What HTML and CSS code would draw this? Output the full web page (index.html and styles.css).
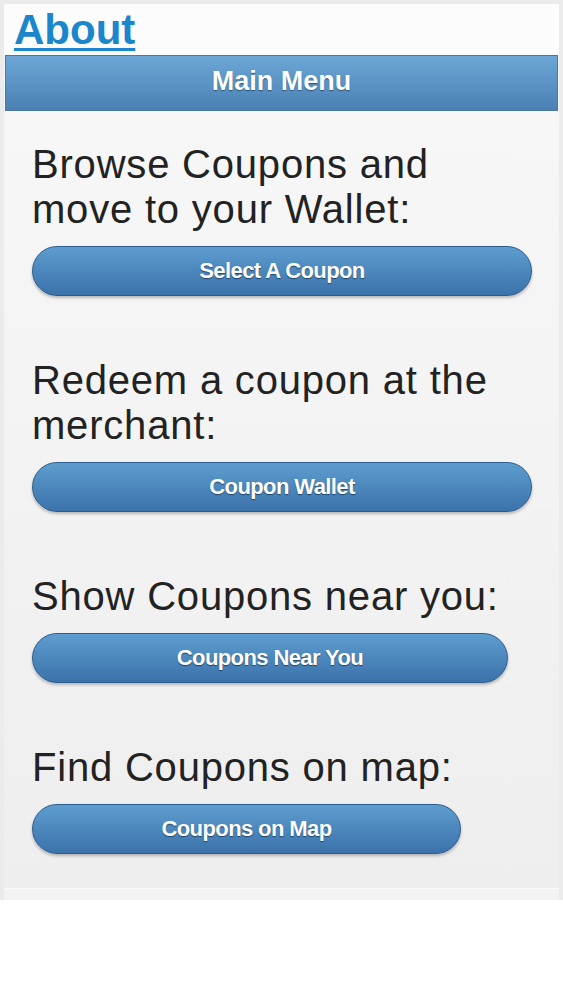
FILE: index.html
```html
<!DOCTYPE html>
<html>
<head>
<meta charset="utf-8">
<link rel="stylesheet" href="styles.css">
</head>
<body>
<div class="frame">
  <div class="page">
    <div class="top"><a class="about" href="#">About</a></div>
    <div class="bar">Main Menu</div>
    <div class="menu">
      <div class="item">
        <h2 class="label">Browse Coupons and move to your Wallet:</h2>
        <a class="btn w500" href="#">Select A Coupon</a>
      </div>
      <div class="item">
        <h2 class="label">Redeem a coupon at the merchant:</h2>
        <a class="btn w500" href="#">Coupon Wallet</a>
      </div>
      <div class="item">
        <h2 class="label">Show Coupons near you:</h2>
        <a class="btn w476" href="#">Coupons Near You</a>
      </div>
      <div class="item">
        <h2 class="label">Find Coupons on map:</h2>
        <a class="btn w429" href="#">Coupons on Map</a>
      </div>
    </div>
    <div class="foot"></div>
  </div>
</div>
</body>
</html>
```

FILE: styles.css
```css
html, body {
  margin: 0;
  padding: 0;
  background: #ffffff;
}
body {
  font-family: "Liberation Sans", Arial, sans-serif;
}
.frame {
  width: 563px;
  height: 900px;
  box-sizing: border-box;
  background: #ebebec;
  padding: 4px 4px 0 4px;
}
.page {
  height: 896px;
  display: flex;
  flex-direction: column;
  background: linear-gradient(#f8f8f9, #efeeef);
}
.top {
  height: 51px;
  background: #fcfcfc;
  padding-left: 10px;
  line-height: 51px;
}
.about {
  font-size: 42px;
  font-weight: bold;
  color: #1b86cc;
  text-decoration: underline;
  text-decoration-thickness: 3px;
  text-underline-offset: 4px;
}
.bar {
  height: 54px;
  margin: 0 1px;
  border: 1px solid #4a78a6;
  background: linear-gradient(#6ca7d6, #4a80b2);
  color: #ffffff;
  font-weight: bold;
  font-size: 27px;
  text-align: center;
  line-height: 51px;
  text-shadow: 0 1px 1px #2b5378;
}
.menu {
  flex: 1;
  display: flex;
  flex-direction: column;
  gap: 62px;
  padding: 31px 26px 0 28px;
}
.item {
  display: flex;
  flex-direction: column;
  align-items: flex-start;
  gap: 14px;
}
.label {
  margin: 0;
  font-weight: normal;
  font-size: 40px;
  letter-spacing: 0.8px;
  line-height: 45px;
  color: #222222;
}
.btn {
  display: block;
  height: 48px;
  box-sizing: content-box;
  border: 1px solid #2c5d8c;
  border-radius: 26px;
  background: linear-gradient(#5e9dcf, #3b72aa);
  box-shadow: 0 2px 3px rgba(0, 0, 0, 0.25);
  color: #ffffff;
  font-weight: bold;
  font-size: 22px;
  letter-spacing: -0.6px;
  text-align: center;
  line-height: 48px;
  text-decoration: none;
  text-shadow: 0 1px 1px #1f4468;
}
.w500 { width: 498px; }
.w476 { width: 474px; }
.w429 { width: 427px; }
.foot {
  height: 11px;
  border-top: 1px solid #fbfbfb;
  background: #f3f3f4;
}
```
